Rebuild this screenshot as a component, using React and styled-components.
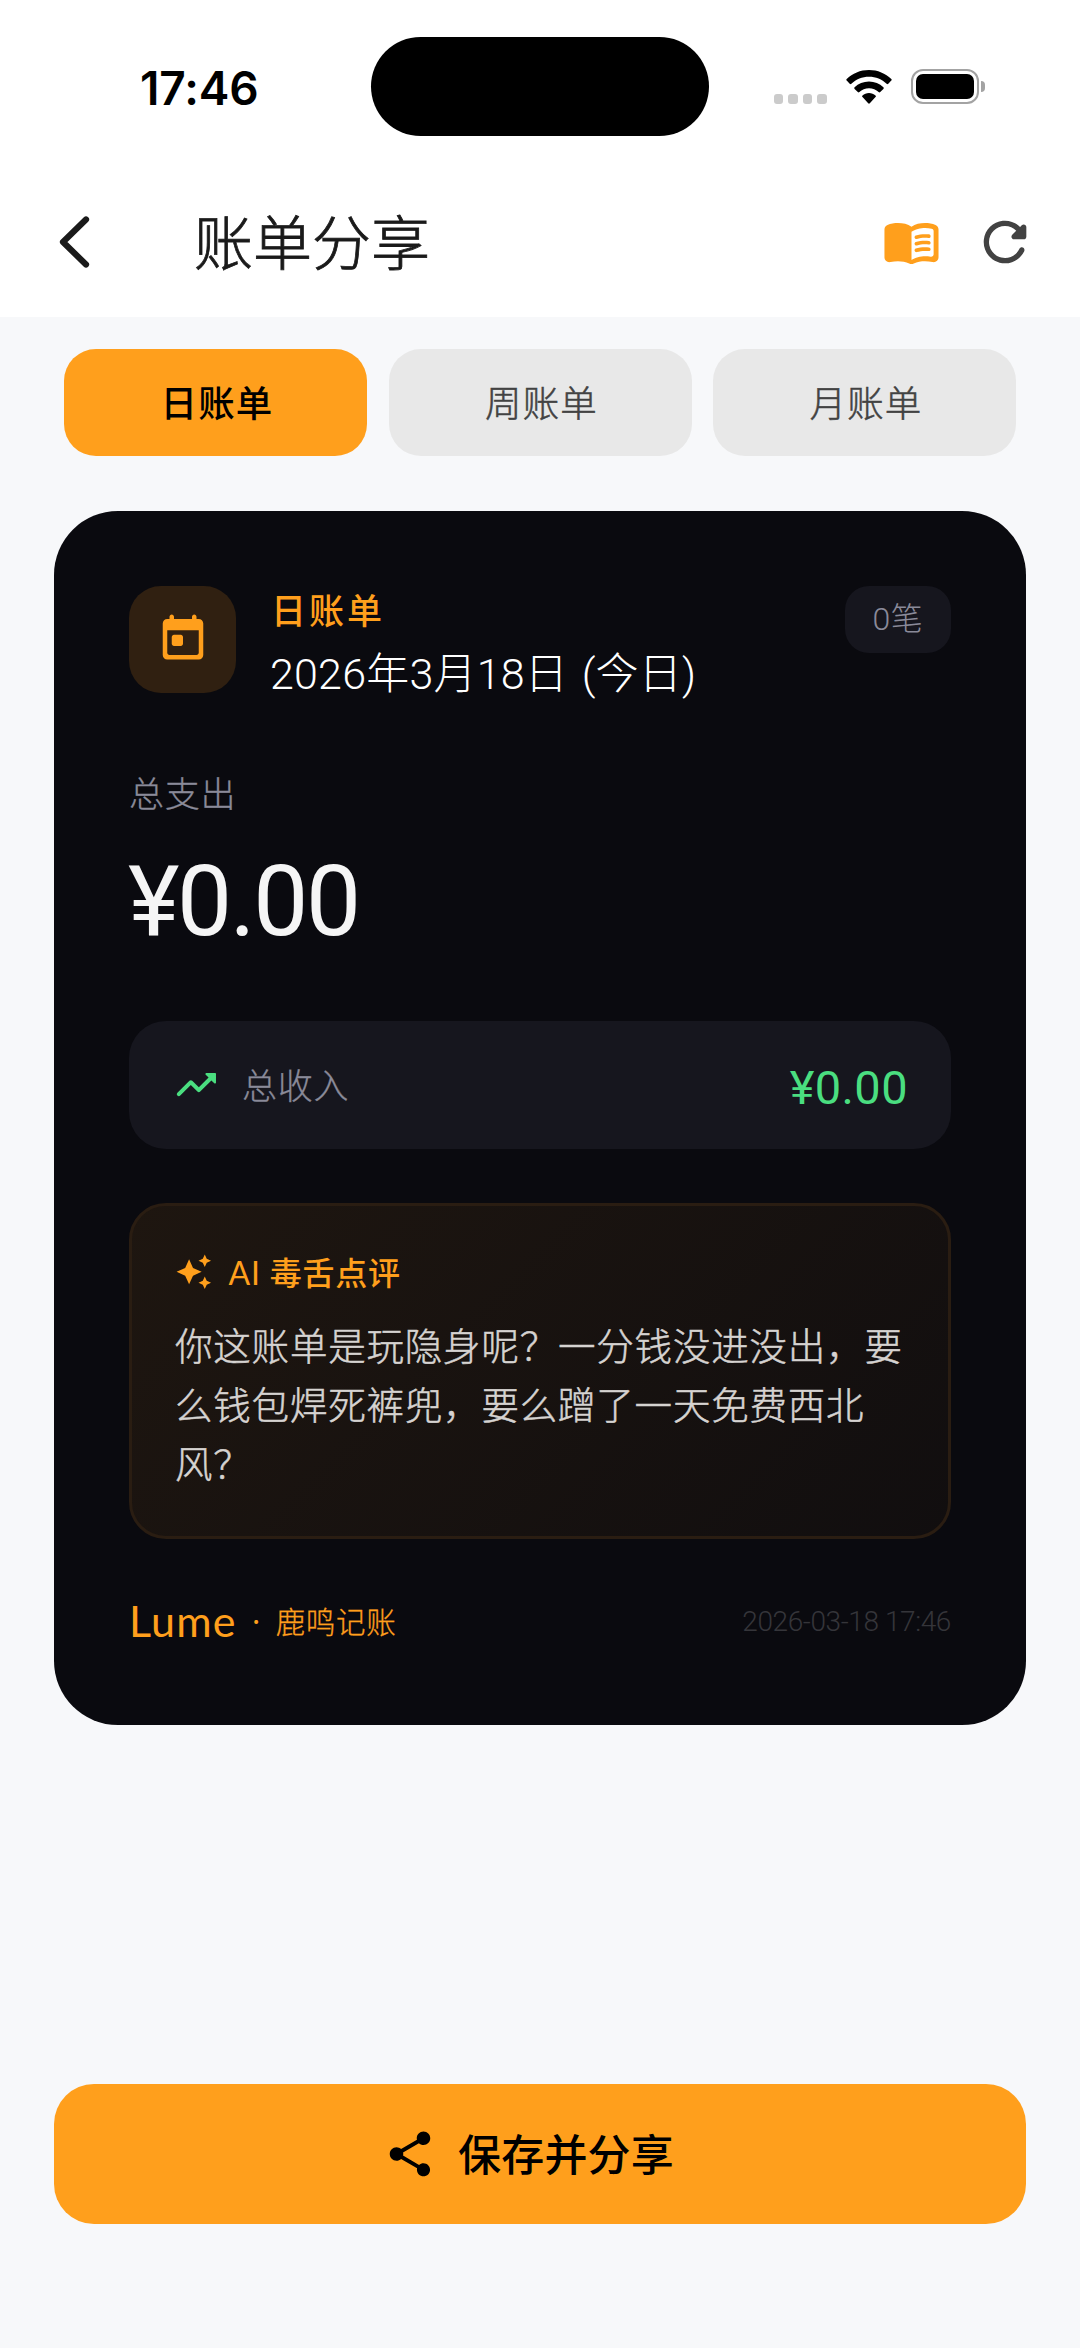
import React, { useState } from "react";
import styled, { createGlobalStyle } from "styled-components";
import { MdShare } from "react-icons/md";

const comment =
  "你这账单是玩隐身呢？一分钱没进没出，要么钱包焊死裤兜，要么蹭了一天免费西北风？";

const tabs = ["日账单", "周账单", "月账单"];

const App = () => {
  const [active, setActive] = useState(0);

  return (
    <Page>
      <GlobalStyle />
      <Header>
        <StatusBar>
          <Time>17:46</Time>
          <Island />
          <StatusIcons>
            <Dots>
              <i />
              <i />
              <i />
              <i />
            </Dots>
            <WifiIcon />
            <Battery>
              <BatteryBody />
              <BatteryCap />
            </Battery>
          </StatusIcons>
        </StatusBar>
        <NavBar>
          <BackIcon />
          <Title>账单分享</Title>
          <BookIcon />
          <RefreshIcon />
        </NavBar>
      </Header>

      <Tabs>
        {tabs.map((name, index) => (
          <Tab key={name} $active={index === active} onClick={() => setActive(index)}>
            {name}
          </Tab>
        ))}
      </Tabs>

      <Card>
        <CardHead>
          <IconTile>
            <TodayIcon />
          </IconTile>
          <CardHeading>
            <Period>日账单</Period>
            <DateText>2026年3月18日 (今日)</DateText>
          </CardHeading>
          <Count>0笔</Count>
        </CardHead>

        <Label>总支出</Label>
        <Amount>¥0.00</Amount>

        <Income>
          <TrendIcon />
          <IncomeLabel>总收入</IncomeLabel>
          <IncomeValue>¥0.00</IncomeValue>
        </Income>

        <Review>
          <ReviewTitle>
            <SparkleIcon />
            <span>
              <Latin>AI</Latin> 毒舌点评
            </span>
          </ReviewTitle>
          <ReviewText>{comment}</ReviewText>
        </Review>

        <CardFoot>
          <Brand>Lume</Brand>
          <Separator>·</Separator>
          <BrandName>鹿鸣记账</BrandName>
          <Stamp>2026-03-18 17:46</Stamp>
        </CardFoot>
      </Card>

      <ShareButton>
        <MdShare size={54} />
        <span>保存并分享</span>
      </ShareButton>
    </Page>
  );
};

const WifiIcon = () => (
  <svg width="46" height="34" viewBox="0 0 46 34" fill="#000">
    <path d="M23 0C14.300 0 6.500 3.400 0.700 8.900a1.200 1.200 0 0 0 0 1.700l3 3.100a1.200 1.200 0 0 0 1.700 0C10 9.300 16.200 6.700 23 6.700s13 2.600 17.600 7a1.200 1.200 0 0 0 1.700 0l3-3.100a1.200 1.200 0 0 0 0-1.700C39.500 3.400 31.700 0 23 0z" />
    <path d="M23 11.500c-5.600 0-10.600 2.200-14.400 5.700a1.200 1.200 0 0 0 0 1.700l3.200 3.200a1.200 1.200 0 0 0 1.600 0c2.500-2.300 5.900-3.800 9.600-3.800s7.100 1.500 9.600 3.800a1.200 1.200 0 0 0 1.600 0l3.200-3.200a1.200 1.200 0 0 0 0-1.700c-3.800-3.500-8.800-5.700-14.400-5.700z" />
    <path d="M23 23c-2.500 0-4.800.9-6.500 2.400a1.100 1.100 0 0 0 0 1.600l5.700 6.300a1.100 1.100 0 0 0 1.600 0l5.700-6.300a1.100 1.100 0 0 0 0-1.600C27.800 23.900 25.500 23 23 23z" />
  </svg>
);

const BackIcon = () => (
  <svg width="34" height="56" viewBox="0 0 34 56" fill="none" stroke="#1a1a1a" strokeWidth="6.200" strokeLinecap="round" strokeLinejoin="round">
    <path d="M29 5.500L6 28l23 22.500" />
  </svg>
);

const BookIcon = () => (
  <svg width="59" height="59" viewBox="0 0 24 24" fill="#ff9f1c">
    <path d="M17.500 4.500c-1.950 0-4.050.4-5.500 1.500-1.450-1.100-3.550-1.500-5.500-1.500-1.450 0-2.990.22-4.280.79C1.490 5.620 1 6.330 1 7.140v11.280c0 1.300 1.220 2.260 2.480 1.940.98-.25 2.020-.36 3.020-.36 1.560 0 3.220.26 4.560.92.6.3 1.280.3 1.870 0 1.340-.67 3-.92 4.560-.92 1 0 2.040.11 3.020.36 1.260.33 2.480-.63 2.480-1.940V7.140c0-.81-.49-1.520-1.220-1.850-1.280-.57-2.820-.79-4.270-.79zM21 17.230c0 .63-.58 1.090-1.200.98-.75-.14-1.530-.2-2.300-.2-1.700 0-4.150.65-5.500 1.500V8c1.350-.85 3.800-1.500 5.500-1.500.92 0 1.830.09 2.700.28.46.1.8.51.8.98v9.470z" />
    <path d="M13.980 11.010c-.32 0-.61-.2-.71-.52-.13-.39.09-.82.48-.94 1.540-.5 3.530-.66 5.360-.45.41.05.71.42.66.83-.05.41-.42.71-.83.66-1.620-.19-3.390-.04-4.730.39-.08.01-.16.03-.23.03z" />
    <path d="M13.980 13.670c-.32 0-.61-.2-.71-.52-.13-.39.09-.82.48-.94 1.530-.5 3.530-.66 5.360-.45.41.05.71.42.66.83-.05.41-.42.71-.83.66-1.620-.19-3.390-.04-4.730.39-.08.02-.16.03-.23.03z" />
    <path d="M13.980 16.330c-.32 0-.61-.2-.71-.52-.13-.39.09-.82.48-.94 1.530-.5 3.530-.66 5.360-.45.41.05.71.42.66.83-.05.41-.42.7-.83.66-1.620-.19-3.390-.04-4.730.39-.08.02-.16.03-.23.03z" />
  </svg>
);

const RefreshIcon = () => (
  <svg width="64" height="64" viewBox="0 0 24 24" fill="#424242">
    <path d="M17.650 6.350c-1.630-1.630-3.940-2.570-6.480-2.310-3.670.37-6.690 3.350-7.100 7.020C3.520 15.910 7.270 20 12 20c3.190 0 5.930-1.870 7.210-4.560.32-.67-.16-1.440-.9-1.440-.37 0-.72.2-.88.53-1.130 2.430-3.840 3.970-6.800 3.310-2.220-.49-4.010-2.300-4.480-4.520C5.310 9.440 8.260 6 12 6c1.660 0 3.140.69 4.220 1.780l-1.510 1.510c-.63.63-.19 1.710.7 1.710H19c.55 0 1-.45 1-1V6.410c0-.89-1.080-1.340-1.710-.71l-.64.65z" />
  </svg>
);

const TodayIcon = () => (
  <svg width="54" height="54" viewBox="0 0 24 24" fill="#ff9f1c">
    <path d="M19 4h-1V3c0-.55-.45-1-1-1s-1 .45-1 1v1H8V3c0-.55-.45-1-1-1s-1 .45-1 1v1H5c-1.110 0-2 .9-2 2v14c0 1.100.89 2 2 2h14c1.100 0 2-.9 2-2V6c0-1.100-.9-2-2-2zm0 15c0 .55-.45 1-1 1H6c-.55 0-1-.45-1-1V9h14v10z" />
    <path d="M8 11h3c.55 0 1 .45 1 1v3c0 .55-.45 1-1 1H8c-.55 0-1-.45-1-1v-3c0-.55.45-1 1-1z" />
  </svg>
);

const TrendIcon = () => (
  <svg width="48" height="48" viewBox="0 0 24 24" fill="#4ade80">
    <path d="M16.850 6.850l1.440 1.440-4.880 4.880-3.290-3.290c-.39-.39-1.020-.39-1.410 0l-6 6.010c-.39.39-.39 1.020 0 1.410.39.39 1.020.39 1.410 0L9.410 12l3.290 3.290c.39.39 1.020.39 1.410 0l5.590-5.580 1.440 1.440c.31.31.85.09.85-.35V6.500c.01-.28-.21-.5-.49-.5h-4.290c-.45 0-.67.54-.36.85z" />
  </svg>
);

const SparkleIcon = () => (
  <svg width="37.600" height="37.600" viewBox="0 0 24 24" fill="#ff9f1c">
    <path d="M19 9l1.250-2.750L23 5l-2.750-1.250L19 1l-1.250 2.750L15 5l2.750 1.250L19 9zm-7.500.5L9 4 6.500 9.500 1 12l5.500 2.500L9 20l2.500-5.500L17 12l-5.500-2.500zM19 15l-1.250 2.750L15 19l2.750 1.250L19 23l1.250-2.750L23 19l-2.750-1.250L19 15z" />
  </svg>
);

const GlobalStyle = createGlobalStyle`
  * {
    box-sizing: border-box;
  }

  body {
    margin: 0;
    background: #f7f8fa;
    font-family: Lato, "Noto Sans CJK SC", sans-serif;
  }

  svg {
    display: block;
    flex-shrink: 0;
  }

  button {
    border: none;
    padding: 0;
    font-family: inherit;
    cursor: pointer;
  }
`;

const Page = styled.div`
  width: 1080px;
  height: 2348px;
  overflow: hidden;
  display: flex;
  flex-direction: column;
  background: #f7f8fa;
`;

const Header = styled.header`
  height: 317px;
  flex-shrink: 0;
  background: #fff;
`;

const StatusBar = styled.div`
  height: 173px;
  display: grid;
  grid-template-columns: 371px 338px 1fr;
  align-items: center;
`;

const Time = styled.div`
  padding: 2px 0 0 140px;
  font-family: Inter, sans-serif;
  font-size: 46px;
  font-weight: 600;
  letter-spacing: -0.1px;
  color: #000;
`;

const Island = styled.div`
  height: 99px;
  border-radius: 50px;
  background: #000;
`;

const StatusIcons = styled.div`
  display: flex;
  align-items: center;
  padding-left: 65px;
`;

const Dots = styled.div`
  display: flex;
  gap: 5px;
  margin-right: 19px;
  padding-top: 25px;

  i {
    width: 9.4px;
    height: 9.4px;
    border-radius: 3px;
    background: #cbcbcb;
  }
`;

const Battery = styled.div`
  display: flex;
  align-items: center;
  gap: 2px;
  margin-left: 19px;
`;

const BatteryBody = styled.div`
  width: 68px;
  height: 35px;
  border: 2px solid #a3a3a3;
  border-radius: 12px;
  padding: 3px;

  &::before {
    content: "";
    display: block;
    height: 100%;
    border-radius: 7px;
    background: #000;
  }
`;

const BatteryCap = styled.div`
  width: 4px;
  height: 11px;
  border-radius: 0 4px 4px 0;
  background: #a3a3a3;
`;

const NavBar = styled.div`
  height: 137px;
  display: flex;
  align-items: center;
  padding: 0 43px 0 57px;
`;

const Title = styled.h1`
  flex: 1;
  margin: 2px 0 0 103px;
  font-size: 59px;
  line-height: 80px;
  font-weight: 300;
  -webkit-text-stroke: 0.8px currentColor;
  color: #1a1a1a;

  & + svg {
    margin-right: 32px;
  }
`;

const Tabs = styled.div`
  display: flex;
  gap: 21.5px;
  padding: 32px 64px 0;
`;

const Tab = styled.button`
  flex: 1;
  height: 107px;
  padding: 0 0 3px 3px;
  border-radius: 32px;
  font-size: 36.5px;
  letter-spacing: 1.2px;
  font-weight: ${(props) => (props.$active ? 500 : 300)};
  -webkit-text-stroke: ${(props) => (props.$active ? 0 : "0.5px")} currentColor;
  color: ${(props) => (props.$active ? "#000" : "#424242")};
  background: ${(props) => (props.$active ? "#ff9f1c" : "#e8e8e8")};
`;

const Card = styled.section`
  height: 1214px;
  margin: 55px 54px 0;
  padding: 75px;
  border-radius: 64px;
  background: #0a0a0f;
`;

const CardHead = styled.div`
  display: flex;
  align-items: flex-start;
  height: 107px;
`;

const IconTile = styled.div`
  width: 107px;
  height: 107px;
  padding-bottom: 5px;
  display: flex;
  align-items: center;
  justify-content: center;
  border-radius: 32px;
  background: #302011;
`;

const CardHeading = styled.div`
  flex: 1;
  padding: 0 0 0 34px;
`;

const Period = styled.div`
  padding-left: 1px;
  font-size: 35px;
  line-height: 48px;
  font-weight: 500;
  letter-spacing: 3px;
  color: #ff9f1c;
`;

const DateText = styled.div`
  margin-top: 12px;
  font-family: Roboto, "Noto Sans CJK SC", sans-serif;
  font-size: 43px;
  line-height: 56px;
  font-weight: 300;
  letter-spacing: 0.2px;
  word-spacing: 3px;
  color: #fff;
  white-space: nowrap;
`;

const Count = styled.div`
  width: 106px;
  height: 67px;
  border-radius: 24px;
  font-family: Roboto, "Noto Sans CJK SC", sans-serif;
  font-size: 32px;
  line-height: 67px;
  font-weight: 300;
  letter-spacing: 0.6px;
  text-align: center;
  color: #8a8a99;
  background: #16161e;
`;

const Label = styled.div`
  margin-top: 75px;
  font-size: 35px;
  line-height: 50px;
  font-weight: 300;
  -webkit-text-stroke: 0.3px currentColor;
  letter-spacing: 0.8px;
  color: #8a8a99;
`;

const Amount = styled.div`
  margin: 27px 0 0 -1px;
  height: 114px;
  font-family: Roboto, sans-serif;
  font-size: 98px;
  line-height: 114px;
  font-weight: 400;
  letter-spacing: -2.4px;
  color: #f5f5f5;
`;

const Income = styled.div`
  display: flex;
  align-items: center;
  height: 128px;
  margin-top: 62px;
  padding: 0 43px;
  border-radius: 37px;
  background: #16161e;
`;

const IncomeLabel = styled.span`
  flex: 1;
  margin: -3px 0 0 22px;
  font-size: 35px;
  font-weight: 300;
  -webkit-text-stroke: 0.3px currentColor;
  letter-spacing: 0.8px;
  color: #8a8a99;
`;

const IncomeValue = styled.span`
  padding-top: 4px;
  font-family: Roboto, sans-serif;
  font-size: 47px;
  font-weight: 400;
  letter-spacing: 0.4px;
  color: #4ade80;
`;

const Review = styled.div`
  height: 336px;
  margin-top: 54px;
  padding: 42px 40px 0 43px;
  border: 3px solid #2a1d12;
  border-radius: 37px;
  background: linear-gradient(135deg, #1e1610, #110e0f);
`;

const ReviewTitle = styled.div`
  display: flex;
  align-items: center;
  gap: 16px;
  height: 48px;
  font-size: 32px;
  font-weight: 500;
  letter-spacing: 0.8px;
  color: #ff9f1c;

  span {
    padding-bottom: 2px;
  }
`;

const Latin = styled.span`
  font-weight: 400;
`;

const ReviewText = styled.p`
  margin: 18px 0 0;
  font-family: "Noto Sans CJK SC", sans-serif;
  font-size: 37.5px;
  line-height: 59.2px;
  font-weight: 300;
  -webkit-text-stroke: 0.5px currentColor;
  letter-spacing: 0.8px;
  color: #d6d3d1;
`;

const CardFoot = styled.div`
  display: flex;
  align-items: center;
  height: 60px;
  margin-top: 51px;
  color: #ff9f1c;
`;

const Brand = styled.span`
  font-size: 43px;
  font-weight: 400;
  letter-spacing: 1.2px;
`;

const Separator = styled.span`
  width: 39px;
  text-align: center;
  font-size: 26px;
`;

const BrandName = styled.span`
  flex: 1;
  font-size: 29.5px;
  font-weight: 300;
  -webkit-text-stroke: 0.3px currentColor;
  letter-spacing: 0.7px;
`;

const Stamp = styled.span`
  padding-top: 3px;
  font-family: Roboto, sans-serif;
  font-size: 28px;
  font-weight: 300;
  letter-spacing: -0.4px;
  color: #35353a;
`;

const ShareButton = styled.button`
  display: flex;
  align-items: center;
  justify-content: center;
  gap: 21px;
  height: 140px;
  flex-shrink: 0;
  margin: auto 54px 124px;
  padding-right: 23px;
  border-radius: 40px;
  font-size: 43px;
  font-weight: 500;
  letter-spacing: 0.2px;
  color: #000;
  background: #ff9f1c;

  span {
    padding-bottom: 4px;
  }
`;

export default App;
